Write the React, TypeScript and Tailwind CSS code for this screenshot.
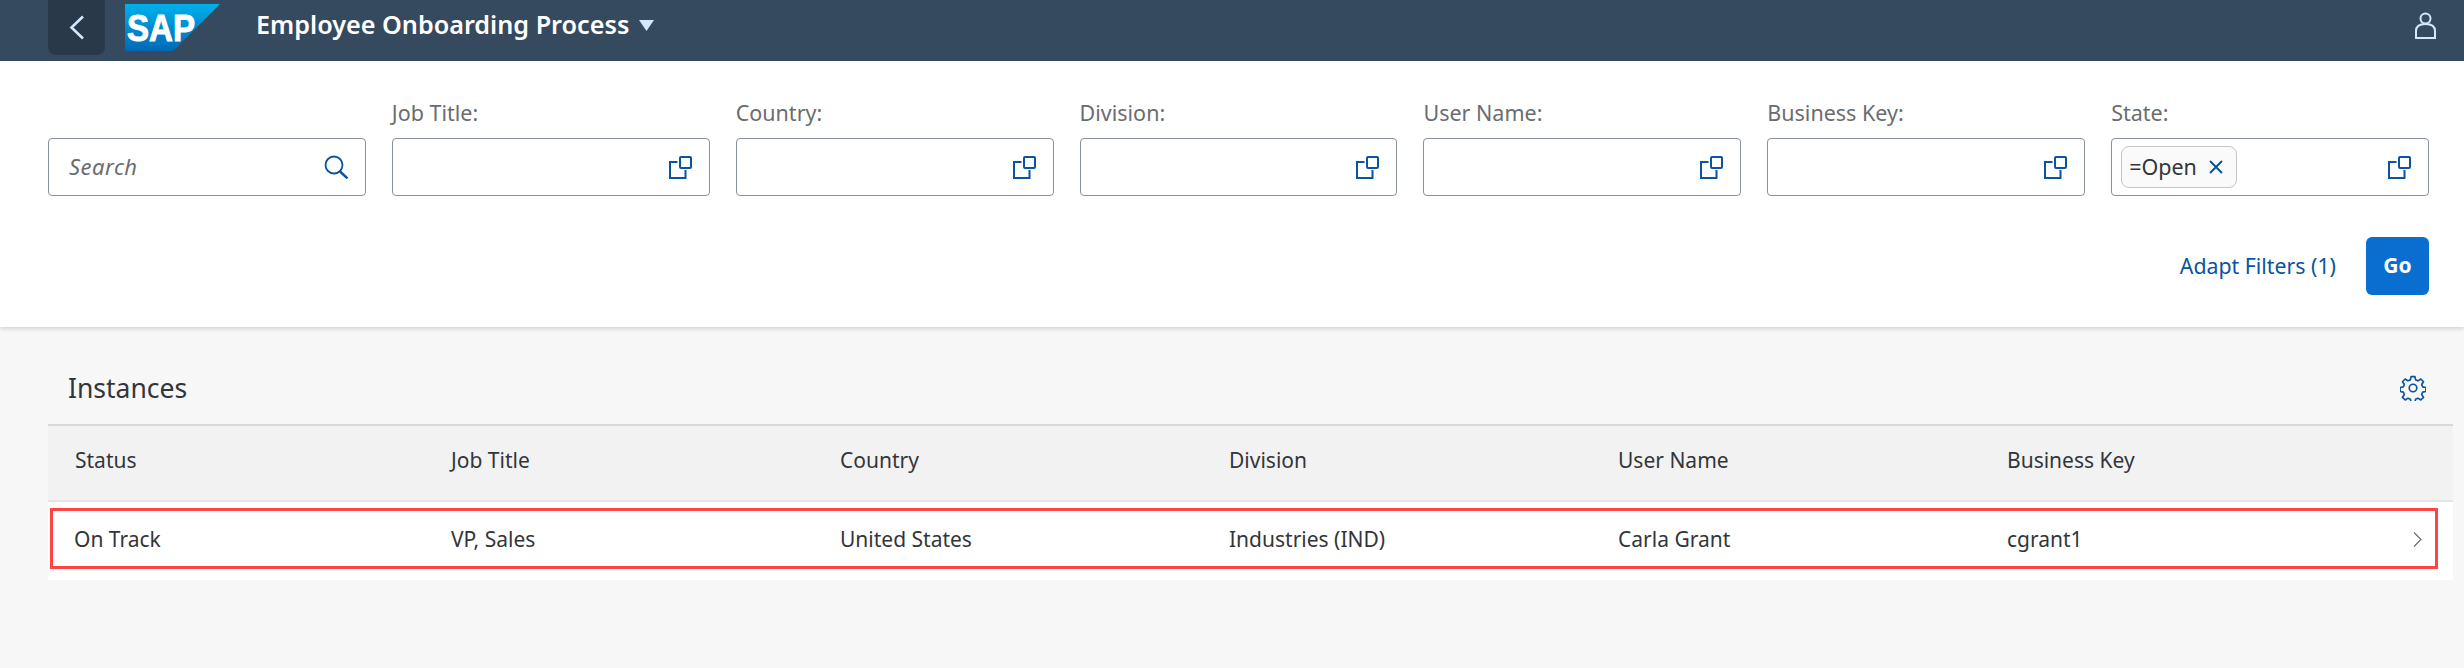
import React from 'react';

const labels = ['Job Title:', 'Country:', 'Division:', 'User Name:', 'Business Key:', 'State:'];
const columns = ['Job Title', 'Country', 'Division', 'User Name', 'Business Key'];
const values = ['VP, Sales', 'United States', 'Industries (IND)', 'Carla Grant', 'cgrant1'];

function ValueHelpIcon() {
  return (
    <svg width="23" height="23" viewBox="0 0 23 23" fill="none" stroke="#0854a0" strokeWidth="2" className="shrink-0">
      <rect x="11" y="1" width="11" height="11" rx="1" />
      <path d="M8.5 6H1v16h15.500v-8" />
    </svg>
  );
}

function SearchIcon() {
  return (
    <svg width="25" height="24" viewBox="0 0 25 24" fill="none" stroke="#0854a0" className="shrink-0">
      <circle cx="10" cy="10" r="8.500" strokeWidth="1.800" />
      <path d="M16 16.500 23.500 23.500" strokeWidth="2.400" />
    </svg>
  );
}

function SapLogo() {
  return (
    <svg width="95" height="47" viewBox="0 0 95 47" className="shrink-0">
      <defs>
        <linearGradient id="sapBlue" x1="0" y1="0" x2="0" y2="1">
          <stop offset="0" stopColor="#00b1eb" />
          <stop offset="1" stopColor="#0068b4" />
        </linearGradient>
      </defs>
      <polygon points="0,0 95,0 48,47 0,47" fill="url(#sapBlue)" />
      <text x="2" y="37" fill="#fff" stroke="#fff" strokeWidth="1" fontFamily="'Liberation Sans', sans-serif" fontWeight="700" fontSize="37" textLength="68" lengthAdjust="spacingAndGlyphs">SAP</text>
    </svg>
  );
}

export default function App() {
  return (
    <div className="min-h-screen bg-[#f7f7f7] font-['Noto_Sans','Open_Sans',sans-serif] text-[#32363a] overflow-hidden">
      {/* Shell bar */}
      <header className="h-[61px] bg-[#354a5f] flex items-start pl-[48px] pr-[28px]">
        <button className="w-[57px] h-[55px] bg-[#29394a] rounded-b-lg flex items-center justify-center">
          <svg width="16" height="25" viewBox="0 0 16 25" fill="none" stroke="#d1e8ff" strokeWidth="2.600">
            <path d="M14 1.500 2.500 12.500 14 23.500" />
          </svg>
        </button>
        <div className="ml-[20px] mt-[4px]">
          <SapLogo />
        </div>
        <div className="ml-[36px] h-[50px] flex items-center gap-[10px]">
          <span className="text-[25.200px] font-semibold text-white">Employee Onboarding Process</span>
          <svg width="15" height="11" viewBox="0 0 15 11" fill="#d1e8ff">
            <polygon points="0,0 15,0 7.500,11" />
          </svg>
        </div>
        <div className="ml-auto mt-[12px]">
          <svg width="21" height="27" viewBox="0 0 21 27" fill="none" stroke="#d1e8ff" strokeWidth="2">
            <circle cx="10.500" cy="6.500" r="5" />
            <path d="M1 26V19C1 14 5 12 10.500 12S20 14 20 19v7z" />
          </svg>
        </div>
      </header>

      {/* Filter bar */}
      <section className="h-[266px] bg-white pt-[36px] pl-[48px] pr-[35px] shadow-[0_2px_4px_rgba(0,0,0,0.14)] relative">
        <div className="grid grid-cols-7 gap-x-[26px]">
          <div className="pt-[41px]">
            <div className="h-[58px] rounded-[4px] border border-[#89919a] flex items-center justify-between pl-[20px] pr-[16px]">
              <span className="text-[22px] tracking-[0.5px] italic text-[#6a6d70] -mt-[2px]">Search</span>
              <SearchIcon />
            </div>
          </div>
          {labels.map((label) => (
            <div key={label}>
              <div className="h-[32px] mb-[9px] text-[21.5px] leading-[32px] text-[#6a6d70]">{label}</div>
              <div className="h-[58px] rounded-[4px] border border-[#89919a] flex items-center justify-between pl-[9px] pr-[17px]">
                {label === 'State:' ? (
                  <span className="h-[42px] w-[116px] rounded-lg border border-[#c6c6c6] bg-[#fafafa] flex items-center justify-between pl-[7px] pr-[13px] text-[21.5px]">
                    =Open
                    <svg width="14" height="14" viewBox="0 0 14 14" fill="none" stroke="#0854a0" strokeWidth="2">
                      <path d="M1 1l12 12M13 1 1 13" />
                    </svg>
                  </span>
                ) : (
                  <span />
                )}
                <ValueHelpIcon />
              </div>
            </div>
          ))}
        </div>
        <div className="mt-[41px] flex items-center justify-end gap-[30px]">
          <a className="text-[21.3px] text-[#0854a0]">Adapt Filters (1)</a>
          <button className="w-[63px] h-[58px] rounded-[6px] bg-[#0a6ed1] text-white text-[21px] font-bold">Go</button>
        </div>
      </section>

      {/* Table */}
      <section className="ml-[48px] mr-[11px]">
        <div className="mt-[37px] mb-[12px] h-[48px] flex items-center justify-between pl-[20px] pr-[27px]">
          <h2 className="text-[26.500px] font-normal mt-[2px]">Instances</h2>
          <svg width="26" height="26" viewBox="0 0 24 24" fill="none" stroke="#0854a0" strokeWidth="1.500" strokeLinejoin="round">
            <circle cx="12" cy="12" r="3.500" />
            <path d="M10.200 1.500h3.600l.6 3 2.200.9 2.600-1.700 2.500 2.500-1.700 2.600.9 2.200 3 .6v3.600l-3 .6-.9 2.200 1.700 2.600-2.500 2.500-2.600-1.700-2.200.9-.6 3h-3.600l-.6-3-2.200-.9-2.600 1.700-2.500-2.500 1.700-2.600-.9-2.200-3-.6v-3.600l3-.6.9-2.200-1.700-2.600 2.500-2.500 2.600 1.700 2.200-.9z" />
          </svg>
        </div>
        <div className="h-[78px] pb-[5px] bg-[#f2f2f2] border-t-2 border-b-2 border-t-[#d9d9d9] border-b-[#e5e5e5] grid grid-cols-[376px_389px_389px_389px_389px_1fr] items-center">
          {['Status', ...columns].map((col) => (
            <div key={col} className="pl-[27px] text-[21px]">{col}</div>
          ))}
        </div>
        <div className="h-[78px] bg-white pt-[6px] pl-[2px] pr-[15px]">
          <div className="h-[61px] pt-[3px] border-[3px] border-[#ff4444] grid grid-cols-[371px_389px_389px_389px_389px_1fr_auto] items-center pr-[13px]">
            <div className="pl-[21px] text-[21px]">On Track</div>
            {values.map((v) => (
              <div key={v} className="pl-[27px] text-[21px]">{v}</div>
            ))}
            <svg width="9" height="15" viewBox="0 0 9 15" fill="none" stroke="#6a6d70" strokeWidth="1.200" className="-mt-[2px]">
              <path d="M1 .5 8 7.500 1 14.500" />
            </svg>
          </div>
        </div>
      </section>
    </div>
  );
}
